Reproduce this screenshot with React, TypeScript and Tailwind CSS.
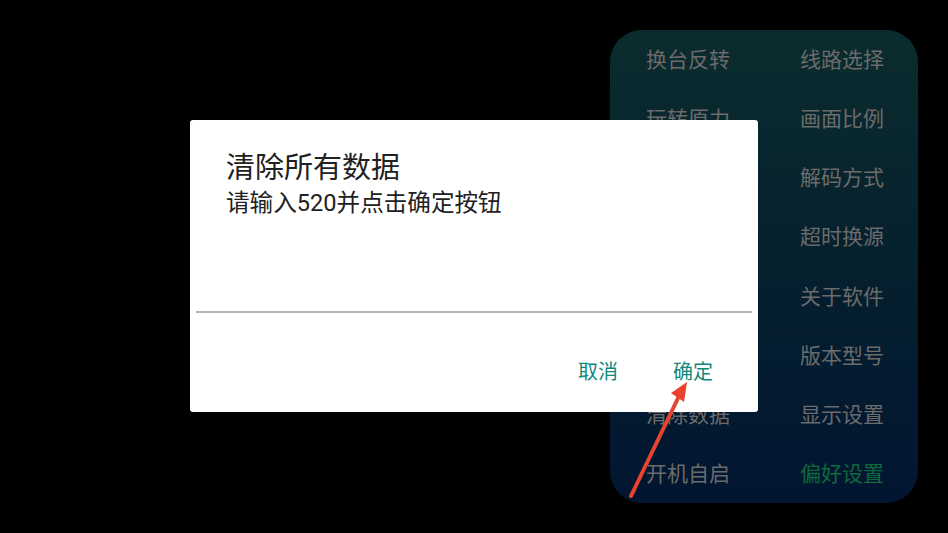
import React from 'react';

// left cells hidden behind the dialog are left blank
const items = [
  ['换台反转', '线路选择'],
  ['玩转原力', '画面比例'],
  ['', '解码方式'],
  ['', '超时换源'],
  ['', '关于软件'],
  ['', '版本型号'],
  ['清除数据', '显示设置'],
  ['开机自启', '偏好设置'],
];

function SettingsPanel() {
  return (
    <div className="w-[308px] h-[473px] rounded-[32px] bg-linear-to-b from-[#0b2c2e] via-[#06202e] to-[#021531] pl-[36px] pt-[1px]">
      <div className="grid grid-cols-[154px_118px]">
        {items.map((row, i) => (
          <React.Fragment key={i}>
            <div className="h-[59.2px] flex items-center text-[21px] text-[#6b6b6b]">{row[0]}</div>
            <div
              className={
                i === items.length - 1
                  ? 'h-[59.2px] flex items-center text-[21px] text-[#0e6a3c]'
                  : 'h-[59.2px] flex items-center text-[21px] text-[#6b6b6b]'
              }
            >
              {row[1]}
            </div>
          </React.Fragment>
        ))}
      </div>
    </div>
  );
}

function ConfirmDialog() {
  return (
    <div className="absolute left-[190px] top-[120px] w-[568px] h-[292px] bg-white rounded-[3px] flex flex-col">
      <div className="pl-[36px] pt-[30px]">
        <div className="text-[29px] leading-[36px] text-[#212121]">清除所有数据</div>
        <div className="mt-[2px] text-[23.6px] leading-[30px] text-[#212121]">请输入520并点击确定按钮</div>
      </div>
      <div className="flex-1" />
      <div className="mx-[6px] h-[2px] bg-[#b3b3b3]" />
      <div className="h-[99px] flex justify-end items-start gap-[55px] pr-[45px] pt-[47px]">
        <span className="text-[20px] leading-[24px] text-[#11897a]">取消</span>
        <span className="text-[20px] leading-[24px] text-[#11897a]">确定</span>
      </div>
    </div>
  );
}

function Arrow() {
  return (
    <svg className="absolute left-0 top-0 pointer-events-none" width="948" height="533" viewBox="0 0 948 533">
      <line x1="631" y1="496" x2="680" y2="394" stroke="#e8432f" strokeWidth="4" strokeLinecap="round" />
      <polygon points="687,382 671,393 684,402" fill="#e8432f" />
    </svg>
  );
}

export default function App() {
  return (
    <div
      className="relative w-[948px] h-[533px] bg-black overflow-hidden"
      style={{ fontFamily: 'Roboto, "Noto Sans CJK SC", sans-serif' }}
    >
      <div className="flex justify-end pt-[30px] pr-[30px]">
        <SettingsPanel />
      </div>
      <ConfirmDialog />
      <Arrow />
    </div>
  );
}
